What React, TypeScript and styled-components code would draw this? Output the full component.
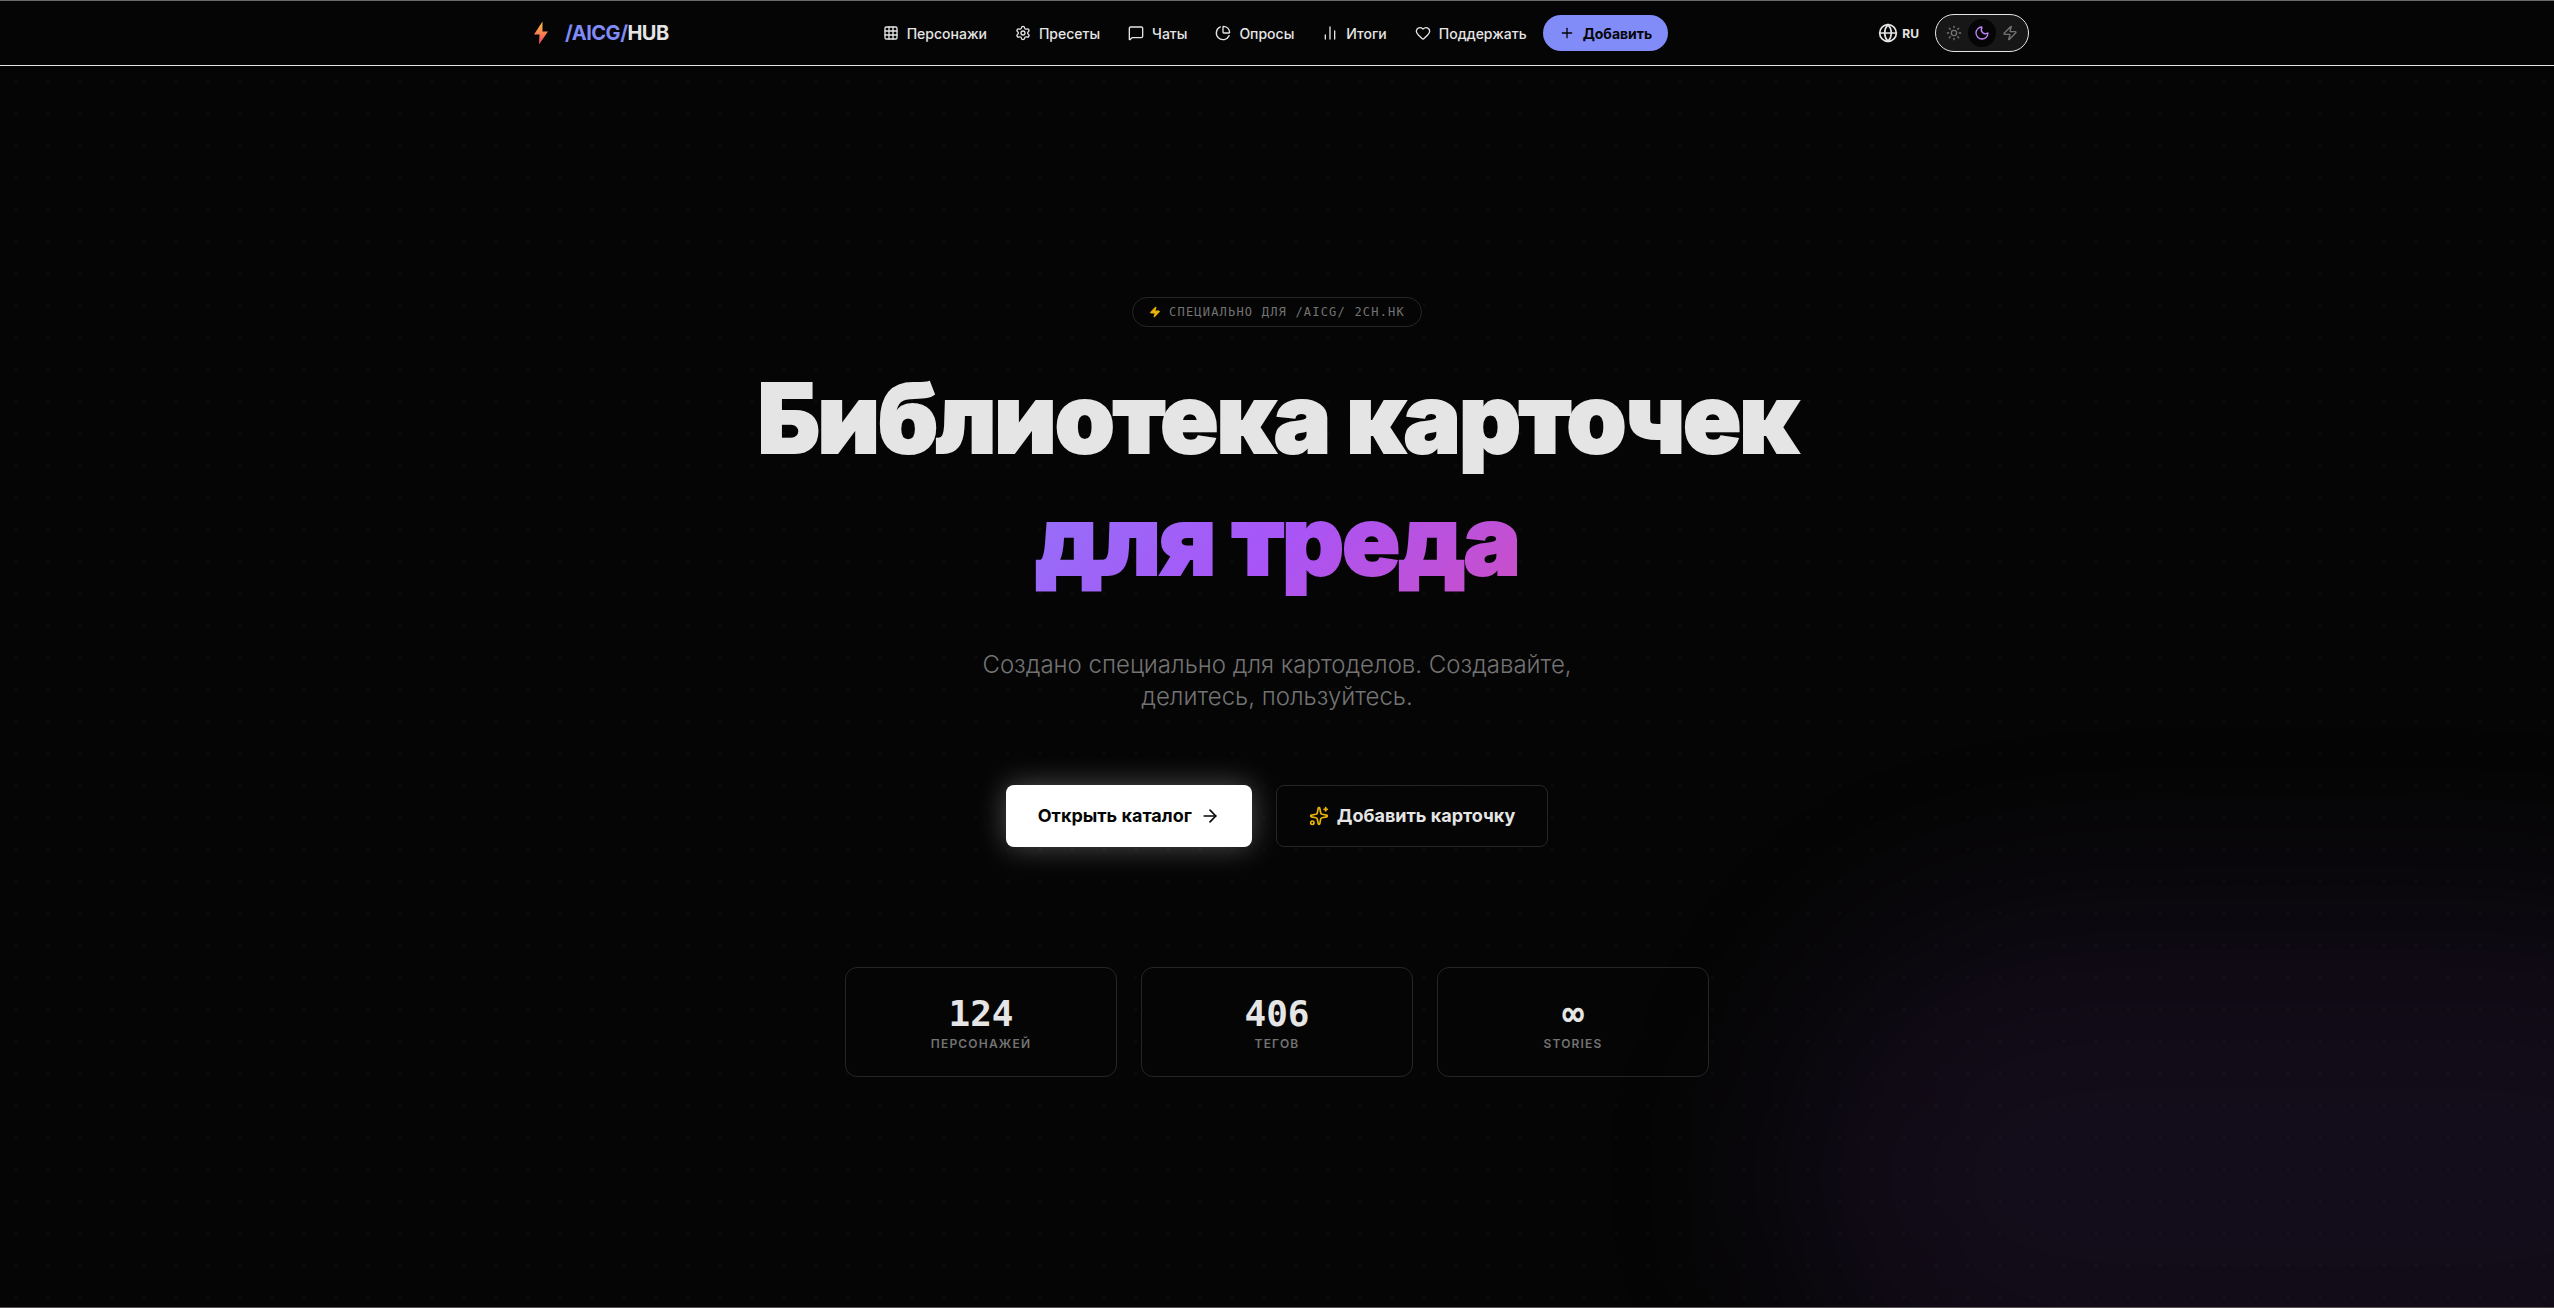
import React from "react";
import styled, { createGlobalStyle } from "styled-components";
import {
  Grid3x3, Settings, MessageSquare, ChartPie, ChartNoAxesColumn, Heart, Plus,
  Globe, Sun, Moon, Zap, ArrowRight, Sparkles,
} from "lucide-react";

const Global = createGlobalStyle`
  *, *::before, *::after { box-sizing: border-box; }
  body {
    margin: 0;
    background: #050505;
    color: #e5e5e5;
    font-family: Inter, "Noto Sans", sans-serif;
    -webkit-font-smoothing: antialiased;
  }
  a { color: inherit; text-decoration: none; }
  button { font-family: inherit; cursor: pointer; }
`;

const Page = styled.div`
  position: relative;
  display: flex;
  flex-direction: column;
  min-height: 100vh;
  overflow: hidden;
  border-top: 1px solid #6b6b6b;
  border-bottom: 1px solid #5a5356;
`;

const Glow = styled.div`
  position: absolute;
  right: -10%;
  bottom: -10%;
  width: 40%;
  height: 40%;
  border-radius: 9999px;
  background: rgba(168, 85, 247, 0.09);
  filter: blur(100px);
`;

const Dots = styled.div`
  position: absolute;
  inset: 0;
  background-image: radial-gradient(rgba(255, 255, 255, 0.03) 1px, transparent 1px);
  background-size: 32px 32px;
`;

const Header = styled.header`
  position: relative;
  border-bottom: 1px solid #e5e5e5;
  background: #050505;
`;

const HeaderInner = styled.div`
  display: flex;
  align-items: center;
  justify-content: space-between;
  max-width: 1536px;
  height: 64px;
  margin: 0 auto;
  padding: 0 16px;
`;

const Brand = styled.a`
  display: flex;
  align-items: center;
  gap: 8px;
  font-size: 20px;
  font-weight: 700;
  letter-spacing: -0.025em;
`;

const Accent = styled.span`
  color: #818cf8;
`;

const Nav = styled.nav`
  display: flex;
  align-items: center;
  gap: 4px;
`;

const NavLink = styled.a<{ $primary?: boolean }>`
  display: flex;
  align-items: center;
  gap: 8px;
  height: 36px;
  padding: 0 ${(p) => (p.$primary ? 16 : 12)}px;
  border-radius: 18px;
  font-size: 14px;
  font-weight: ${(p) => (p.$primary ? 650 : 550)};
  color: ${(p) => (p.$primary ? "#050505" : "#e5e5e5")};
  background: ${(p) => (p.$primary ? "#818cf8" : "transparent")};
`;

const Tools = styled.div`
  display: flex;
  align-items: center;
  gap: 16px;
`;

const Lang = styled.button`
  display: flex;
  align-items: center;
  gap: 4px;
  padding: 0 0 0 8px;
  border: 0;
  background: none;
  color: #e5e5e5;
  font-size: 12px;
  font-weight: 700;
`;

const Themes = styled.div`
  display: flex;
  padding: 4px;
  border: 1px solid #e5e5e5;
  border-radius: 20px;
  background: #171717;
`;

const ThemeButton = styled.button<{ $active?: boolean }>`
  display: grid;
  place-items: center;
  width: 28px;
  height: 28px;
  padding: 0;
  border: 0;
  border-radius: 50%;
  background: ${(p) => (p.$active ? "#050505" : "transparent")};
  color: ${(p) => (p.$active ? "#c084fc" : "#737373")};
`;

const Hero = styled.main`
  position: relative;
  flex: 1;
  display: flex;
  flex-direction: column;
  align-items: center;
  justify-content: center;
  padding: 80px 16px;
`;

const Badge = styled.div`
  display: flex;
  align-items: center;
  gap: 8px;
  height: 30px;
  padding: 0 16px;
  border: 1px solid #262626;
  border-radius: 15px;
  background: #050505;
  color: #737373;
  font: 12px/16px "DejaVu Sans Mono", monospace;
  letter-spacing: 0.1em;
`;

const Title = styled.h1`
  display: flex;
  flex-direction: column;
  gap: 16px;
  margin: 38px 0 0;
  font-size: 96px;
  line-height: 106px;
  font-weight: 900;
  letter-spacing: -2px;
  text-align: center;
  -webkit-text-stroke: 2px;
`;

const Gradient = styled.span`
  margin-bottom: -8px;
  padding-bottom: 8px;
  background: linear-gradient(135deg, #818cf8, #a855f7, #ec4899);
  background-clip: text;
  color: transparent;
`;

const Lead = styled.p`
  max-width: 672px;
  margin: 56px 0 0;
  color: #737373;
  font-size: 24px;
  line-height: 32px;
  font-weight: 300;
  text-align: center;
`;

const Actions = styled.div`
  display: flex;
  gap: 24px;
  margin-top: 72px;
`;

const Action = styled.a<{ $solid?: boolean }>`
  display: flex;
  align-items: center;
  gap: 8px;
  height: 62px;
  padding: 0 32px;
  border: ${(p) => (p.$solid ? "0" : "1px solid #262626")};
  border-radius: 8px;
  background: ${(p) => (p.$solid ? "#fff" : "#050505")};
  color: ${(p) => (p.$solid ? "#050505" : "#e5e5e5")};
  box-shadow: ${(p) => (p.$solid ? "0 0 30px rgba(255, 255, 255, 0.3)" : "none")};
  font-size: 18px;
  font-weight: 700;
`;

const Stats = styled.dl`
  display: grid;
  grid-template-columns: repeat(3, 1fr);
  gap: 24px;
  width: 100%;
  max-width: 864px;
  margin: 120px 0 0;
`;

const Stat = styled.div`
  display: flex;
  flex-direction: column-reverse;
  align-items: center;
  padding: 24px;
  border: 1px solid #262626;
  border-radius: 12px;
  background: rgba(5, 5, 5, 0.8);
`;

const Value = styled.dd`
  margin: 0;
  font: 700 36px/44px "DejaVu Sans Mono", monospace;
`;

const Label = styled.dt`
  color: #737373;
  font-size: 12px;
  line-height: 16px;
  font-weight: 600;
  letter-spacing: 0.1em;
`;

const links = [
  { text: "Персонажи", Icon: Grid3x3 },
  { text: "Пресеты", Icon: Settings },
  { text: "Чаты", Icon: MessageSquare },
  { text: "Опросы", Icon: ChartPie },
  { text: "Итоги", Icon: ChartNoAxesColumn },
  { text: "Поддержать", Icon: Heart },
];

const stats = [
  { value: "124", label: "ПЕРСОНАЖЕЙ" },
  { value: "406", label: "ТЕГОВ" },
  { value: "∞", label: "STORIES" },
];

const LogoBolt = () => (
  <svg width="32" height="32" viewBox="0 0 32 32" aria-hidden="true">
    <defs>
      <linearGradient id="bolt" x1="0" y1="0" x2="0" y2="1">
        <stop offset="0" stopColor="#fbbf45" />
        <stop offset="1" stopColor="#f4465a" />
      </linearGradient>
    </defs>
    <path d="M17.5 4.5 9 17.5h5.5L14 27.5 23 14.5h-5.5z" fill="url(#bolt)" />
  </svg>
);

export default function App() {
  return (
    <Page>
      <Global />
      <Glow />
      <Dots />
      <Header>
        <HeaderInner>
          <Brand href="#">
            <LogoBolt />
            <span><Accent>/AICG/</Accent>HUB</span>
          </Brand>
          <Nav>
            {links.map(({ text, Icon }) => (
              <NavLink href="#" key={text}>
                <Icon size={16} />
                {text}
              </NavLink>
            ))}
            <NavLink href="#" $primary>
              <Plus size={16} />
              Добавить
            </NavLink>
          </Nav>
          <Tools>
            <Lang type="button"><Globe size={20} />RU</Lang>
            <Themes>
              <ThemeButton type="button" aria-label="Sun"><Sun size={16} /></ThemeButton>
              <ThemeButton type="button" aria-label="Moon" $active><Moon size={16} /></ThemeButton>
              <ThemeButton type="button" aria-label="Zap"><Zap size={16} /></ThemeButton>
            </Themes>
          </Tools>
        </HeaderInner>
      </Header>
      <Hero>
        <Badge><Zap size={12} color="#eab308" fill="#eab308" />СПЕЦИАЛЬНО ДЛЯ /AICG/ 2CH.HK</Badge>
        <Title>
          <span>Библиотека карточек</span>
          <Gradient>для треда</Gradient>
        </Title>
        <Lead>Создано специально для картоделов. Создавайте, делитесь, пользуйтесь.</Lead>
        <Actions>
          <Action href="#" $solid>Открыть каталог<ArrowRight size={20} /></Action>
          <Action href="#"><Sparkles size={20} color="#eab308" />Добавить карточку</Action>
        </Actions>
        <Stats>
          {stats.map((s) => (
            <Stat key={s.label}>
              <Label>{s.label}</Label>
              <Value>{s.value}</Value>
            </Stat>
          ))}
        </Stats>
      </Hero>
    </Page>
  );
}
